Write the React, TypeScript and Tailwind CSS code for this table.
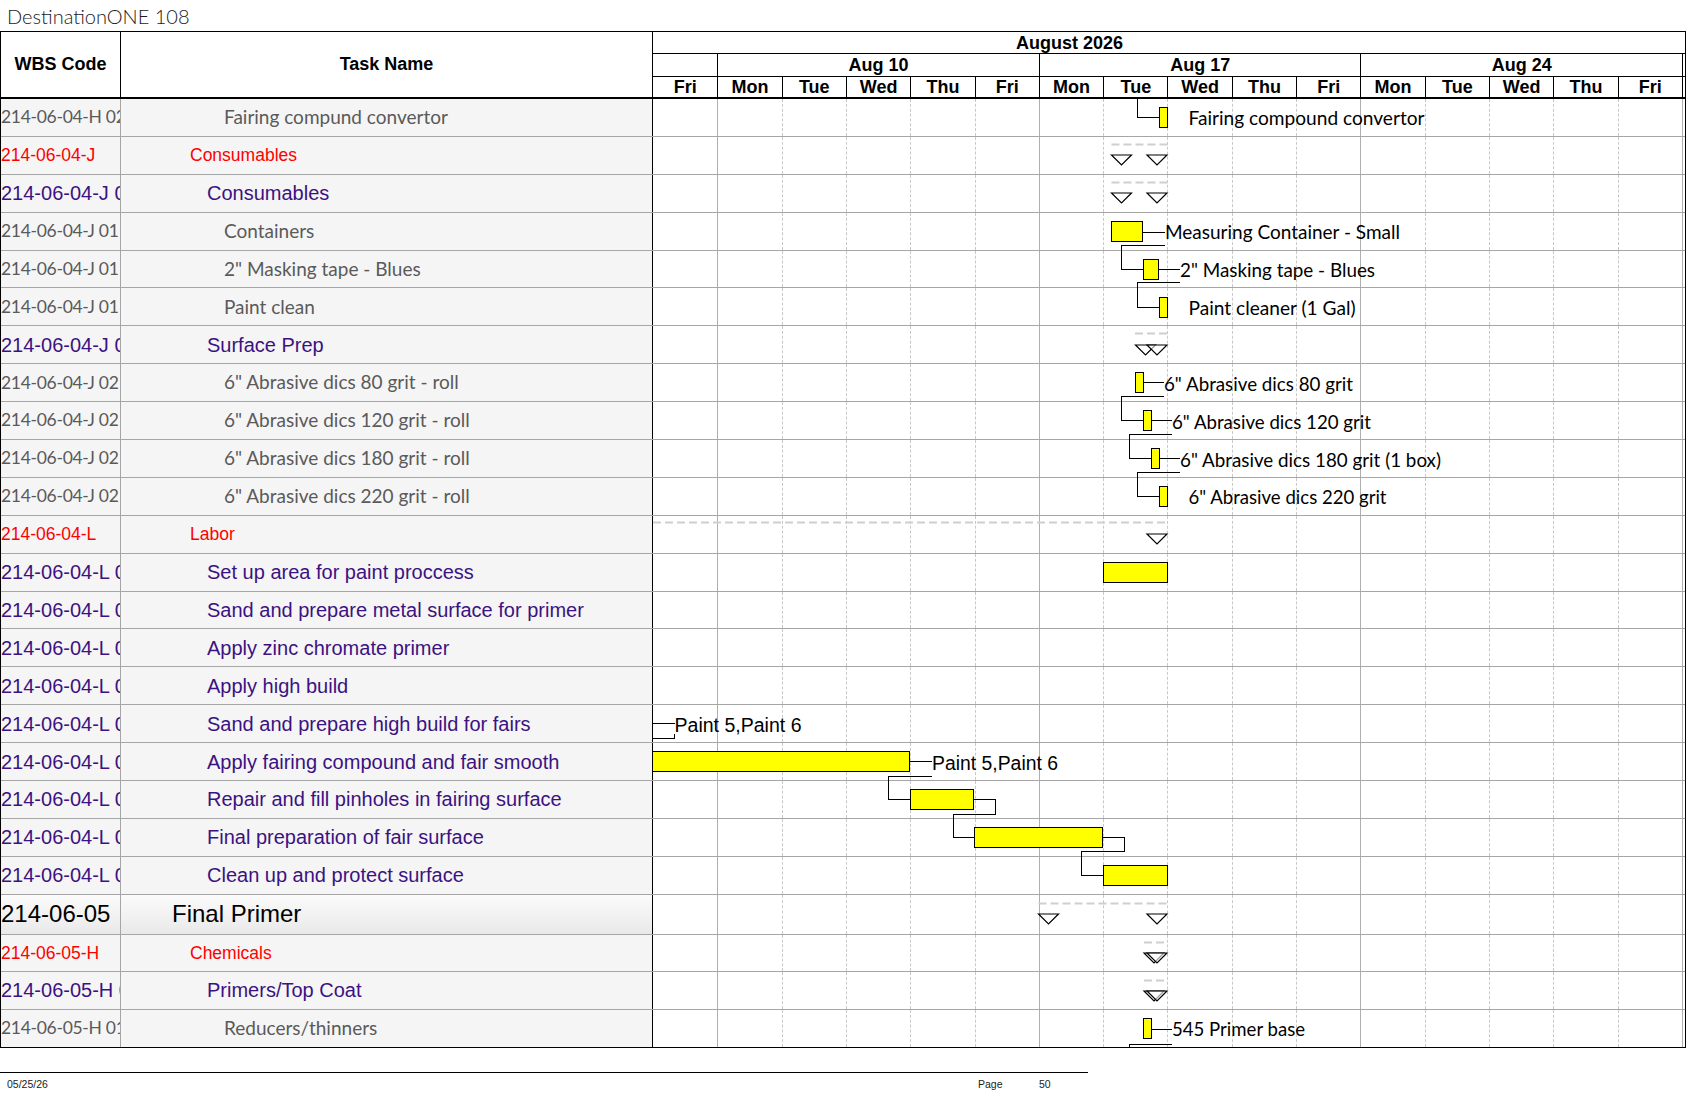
import React from 'react'

const ARIAL = "font-['Liberation_Sans',Arial,sans-serif]"

type Row = { wbs: string; name: string; lvl: 1 | 2 | 3 | 4 }

const rows: Row[] = [
  { wbs: '214-06-04-H 02', name: 'Fairing compund convertor', lvl: 4 },
  { wbs: '214-06-04-J', name: 'Consumables', lvl: 2 },
  { wbs: '214-06-04-J 01', name: 'Consumables', lvl: 3 },
  { wbs: '214-06-04-J 01', name: 'Containers', lvl: 4 },
  { wbs: '214-06-04-J 01', name: '2" Masking tape - Blues', lvl: 4 },
  { wbs: '214-06-04-J 01', name: 'Paint clean', lvl: 4 },
  { wbs: '214-06-04-J 02', name: 'Surface Prep', lvl: 3 },
  { wbs: '214-06-04-J 02', name: '6" Abrasive dics 80 grit - roll', lvl: 4 },
  { wbs: '214-06-04-J 02', name: '6" Abrasive dics 120 grit - roll', lvl: 4 },
  { wbs: '214-06-04-J 02', name: '6" Abrasive dics 180 grit - roll', lvl: 4 },
  { wbs: '214-06-04-J 02', name: '6" Abrasive dics 220 grit - roll', lvl: 4 },
  { wbs: '214-06-04-L', name: 'Labor', lvl: 2 },
  { wbs: '214-06-04-L 01', name: 'Set up area for paint proccess', lvl: 3 },
  { wbs: '214-06-04-L 02', name: 'Sand and prepare metal surface for primer', lvl: 3 },
  { wbs: '214-06-04-L 03', name: 'Apply zinc chromate primer', lvl: 3 },
  { wbs: '214-06-04-L 04', name: 'Apply high build', lvl: 3 },
  { wbs: '214-06-04-L 05', name: 'Sand and prepare high build for fairs', lvl: 3 },
  { wbs: '214-06-04-L 06', name: 'Apply fairing compound and fair smooth', lvl: 3 },
  { wbs: '214-06-04-L 07', name: 'Repair and fill pinholes in fairing surface', lvl: 3 },
  { wbs: '214-06-04-L 08', name: 'Final preparation of fair surface', lvl: 3 },
  { wbs: '214-06-04-L 09', name: 'Clean up and protect surface', lvl: 3 },
  { wbs: '214-06-05', name: 'Final Primer', lvl: 1 },
  { wbs: '214-06-05-H', name: 'Chemicals', lvl: 2 },
  { wbs: '214-06-05-H 01', name: 'Primers/Top Coat', lvl: 3 },
  { wbs: '214-06-05-H 01', name: 'Reducers/thinners', lvl: 4 },
]

const levelStyle = {
  1: { wbs: "font-['Liberation_Sans',Arial,sans-serif] text-[24px] text-black", name: "font-['Liberation_Sans',Arial,sans-serif] text-[24px] text-black pl-[51px]" },
  2: { wbs: "font-['Liberation_Sans',Arial,sans-serif] text-[17.5px] text-[#ff0000]", name: "font-['Liberation_Sans',Arial,sans-serif] text-[17.5px] text-[#ff0000] pl-[69px]" },
  3: { wbs: "font-['Liberation_Sans',Arial,sans-serif] text-[20px] text-[#3c1282]", name: "font-['Liberation_Sans',Arial,sans-serif] text-[20px] text-[#3c1282] pl-[86px]" },
  4: { wbs: "font-['Lato','Carlito',sans-serif] text-[17.5px] tracking-[-0.3px] text-[#5a5a5a]", name: "font-['Lato','Carlito',sans-serif] text-[19px] text-[#5a5a5a] pl-[103px]" },
}

const rowHeights = [
  'h-[37.9px] border-b', 'h-[37.9px] border-b', 'h-[37.9px] border-b', 'h-[37.9px] border-b', 'h-[37.9px] border-b',
  'h-[37.9px] border-b', 'h-[37.9px] border-b', 'h-[37.9px] border-b', 'h-[37.9px] border-b', 'h-[37.9px] border-b',
  'h-[37.9px] border-b', 'h-[37.9px] border-b', 'h-[37.9px] border-b', 'h-[37.9px] border-b', 'h-[37.9px] border-b',
  'h-[37.9px] border-b', 'h-[37.9px] border-b', 'h-[37.9px] border-b', 'h-[37.9px] border-b', 'h-[37.9px] border-b',
  'h-[37.9px] border-b', 'h-[40px] border-b', 'h-[37.5px] border-b', 'h-[37.5px] border-b', 'h-[37.4px]',
]

const days = ['Fri', 'Mon', 'Tue', 'Wed', 'Thu', 'Fri', 'Mon', 'Tue', 'Wed', 'Thu', 'Fri', 'Mon', 'Tue', 'Wed', 'Thu', 'Fri']

// row tops in page coordinates, used by the chart overlay
const top = (n: number) => {
  if (n <= 22) return 99 + (n - 1) * 37.9
  if (n === 23) return 934.9
  if (n === 24) return 972.4
  return 1009.9
}

const bars: [number, number, number][] = [
  [1, 1159.5, 8],
  [4, 1111.5, 31],
  [5, 1143.5, 15],
  [6, 1159.5, 8],
  [8, 1135.5, 7.5],
  [9, 1143.5, 7.5],
  [10, 1151.5, 7.5],
  [11, 1159.5, 8],
  [13, 1103.5, 64],
  [18, 652.5, 257],
  [19, 910.5, 63],
  [20, 974.5, 128],
  [21, 1103.5, 63.5],
  [25, 1143.5, 7.5],
]

const links = [
  '1137.5,99 1137.5,117.5 1159.5,117.5',
  '1142.5,232.5 1165,232.5',
  '1165,245.5 1121.5,245.5 1121.5,269.5 1143.5,269.5',
  '1158.5,269.5 1180,269.5',
  '1180,282.5 1137.5,282.5 1137.5,307.5 1159.5,307.5',
  '1143,382.5 1164,382.5',
  '1164,396.5 1121.5,396.5 1121.5,420.5 1143.5,420.5',
  '1151,420.5 1172,420.5',
  '1172,434.5 1129.5,434.5 1129.5,458.5 1151.5,458.5',
  '1159,458 1180,458',
  '1180,472.5 1137.5,472.5 1137.5,496.5 1159.5,496.5',
  '652,723.5 674.5,723.5',
  '652,738.5 674.5,738.5 674.5,733.5',
  '909.5,761.5 932,761.5',
  '932,776.5 888.5,776.5 888.5,799.5 910.5,799.5',
  '973.5,799.5 995.5,799.5 995.5,814.5 953.5,814.5 953.5,837.5 974.5,837.5',
  '1102.5,837.5 1124.5,837.5 1124.5,851.5 1081.5,851.5 1081.5,875.5 1103.5,875.5',
  '1151,1029.5 1172,1029.5',
  '1172,1044.5 1129.5,1044.5 1129.5,1048',
]

const summaries: { y: number; from: number; to: number; tris: [number, number][] }[] = [
  { y: 144.5, from: 1111.5, to: 1167.5, tris: [[1111.5, 155], [1147, 155]] },
  { y: 182.5, from: 1111.5, to: 1167.5, tris: [[1111.5, 193], [1147, 193]] },
  { y: 333.5, from: 1135, to: 1167.5, tris: [[1135.5, 345], [1147, 345]] },
  { y: 522.5, from: 653, to: 1167.5, tris: [[1147, 534]] },
  { y: 903.5, from: 1038.5, to: 1167, tris: [[1038.5, 914], [1147, 914]] },
  { y: 942.5, from: 1144, to: 1167, tris: [[1144, 953], [1147, 953]] },
  { y: 980.5, from: 1144, to: 1167, tris: [[1144, 991], [1147, 991]] },
]

const labels: { row: number; x: number; text: string; w: number; arial?: boolean }[] = [
  { row: 1, x: 1188.5, text: 'Fairing compound convertor', w: 236 },
  { row: 4, x: 1165, text: 'Measuring Container - Small', w: 235 },
  { row: 5, x: 1180, text: '2" Masking tape - Blues', w: 195 },
  { row: 6, x: 1188.5, text: 'Paint cleaner (1 Gal)', w: 167 },
  { row: 8, x: 1164, text: '6" Abrasive dics 80 grit', w: 189 },
  { row: 9, x: 1172, text: '6" Abrasive dics 120 grit', w: 199 },
  { row: 10, x: 1180, text: '6" Abrasive dics 180 grit (1 box)', w: 261 },
  { row: 11, x: 1188.5, text: '6" Abrasive dics 220 grit', w: 198 },
  { row: 17, x: 674.5, text: 'Paint 5,Paint 6', w: 127, arial: true },
  { row: 18, x: 932, text: 'Paint 5,Paint 6', w: 126, arial: true },
  { row: 25, x: 1172, text: '545 Primer base', w: 133 },
]

function GanttCells() {
  return (
    <div className="flex h-full w-[1033px] shrink-0 border-l border-black bg-white">
      <div className="h-full w-[64.3px] shrink-0" />
      {days.slice(1).map((d, i) => (
        <div
          key={i}
          className={`h-full w-[64.32px] shrink-0 border-l ${
            d === 'Mon' ? 'border-solid border-[#b0b0b0]' : 'border-dashed border-[#c8c8c8]'
          }`}
        />
      ))}
      <div className="h-full flex-1 border-l border-[#b0b0b0]" />
    </div>
  )
}

function ChartOverlay() {
  return (
    <svg
      className="absolute left-0 top-0 pointer-events-none"
      width={1684}
      height={949}
      viewBox="1 99 1684 949"
    >
      {summaries.map((s, i) => (
        <g key={i}>
          <line x1={s.from} x2={s.to} y1={s.y} y2={s.y} stroke="#cfcfcf" strokeWidth={2} strokeDasharray="8 4" />
          {s.tris.map(([x, t], j) => (
            <polygon
              key={j}
              points={`${x},${t} ${x + 20},${t} ${x + 10},${t + 10}`}
              fill="white"
              fillOpacity={j === 0 ? 1 : 0.6}
              stroke="black"
              strokeWidth={1.2}
            />
          ))}
        </g>
      ))}
      {links.map((p, i) => (
        <polyline key={i} points={p} fill="none" stroke="black" strokeWidth={1} shapeRendering="crispEdges" />
      ))}
      {bars.map(([r, x, w], i) => (
        <rect
          key={i}
          x={x}
          y={Math.round(top(r) + 8) + 0.5}
          width={w}
          height={20}
          fill="#ffff00"
          stroke="black"
          strokeWidth={1}
          shapeRendering="crispEdges"
        />
      ))}
      {labels.map((l, i) => (
        <text
          key={i}
          x={l.x}
          y={top(l.row) + 26.4}
          fontSize={l.arial ? 19.5 : 19}
          fontFamily={l.arial ? "'Liberation Sans', Arial, sans-serif" : "Lato, Carlito, sans-serif"}
          fill="black"
          textLength={l.w}
          lengthAdjust="spacingAndGlyphs"
        >
          {l.text}
        </text>
      ))}
    </svg>
  )
}

export default function App() {
  return (
    <div className="w-[1687px] h-[1097px] bg-white overflow-hidden">
      <div className="h-[31px] flex items-center pl-[7px] pt-[1px] font-['Lato',sans-serif] text-[20px] text-[#1a1a1a] font-light">
        DestinationONE 108
      </div>

      <div className="w-[1686px] border border-black">
        {/* header */}
        <div className={`flex h-[67px] border-b-2 border-black ${ARIAL} font-bold text-[18px] text-black`}>
          <div className="w-[120px] shrink-0 border-r border-black flex items-center justify-center">WBS Code</div>
          <div className="w-[531px] shrink-0 flex items-center justify-center">Task Name</div>
          <div className="w-[1033px] shrink-0 border-l border-black flex flex-col">
            <div className="h-[22px] border-b border-black flex items-center pl-[363px] leading-none">August 2026</div>
            <div className="h-[23px] border-b border-black flex">
              <div className="w-[64.3px] shrink-0" />
              {['Aug 10', 'Aug 17', 'Aug 24'].map((w) => (
                <div key={w} className="w-[321.6px] shrink-0 border-l border-black flex items-center justify-center leading-none">
                  {w}
                </div>
              ))}
              <div className="flex-1 border-l border-black" />
            </div>
            <div className="h-[20px] flex">
              {days.map((d, i) => (
                <div
                  key={i}
                  className={`shrink-0 flex items-center justify-center leading-none ${
                    i === 0 ? 'w-[64.3px]' : 'w-[64.32px] border-l border-black'
                  }`}
                >
                  {d}
                </div>
              ))}
              <div className="flex-1 border-l border-black" />
            </div>
          </div>
        </div>

        {/* body */}
        <div className="relative">
          {rows.map((r, i) => {
            const st = levelStyle[r.lvl]
            const bg = r.lvl === 1 ? 'bg-gradient-to-b from-[#fbfbfb] to-[#e9e9e9]' : 'bg-[#f5f5f5]'
            return (
              <div key={i} className={`flex ${rowHeights[i]} border-[#a6a6a6]`}>
                <div className={`w-[120px] shrink-0 border-r border-[#a6a6a6] ${bg} flex items-center overflow-hidden whitespace-nowrap`}>
                  <span className={st.wbs}>{r.wbs}</span>
                </div>
                <div className={`w-[531px] shrink-0 ${bg} flex items-center overflow-hidden whitespace-nowrap ${st.name}`}>
                  {r.name}
                </div>
                <GanttCells />
              </div>
            )
          })}
          <ChartOverlay />
        </div>
      </div>

      <div className={`mt-[24px] w-[1088px] border-t border-black flex items-center h-[25px] pl-[7px] ${ARIAL} text-[10.5px] text-[#222]`}>
        <span className="w-[971px] shrink-0">05/25/26</span>
        <span className="w-[61px] shrink-0">Page</span>
        <span>50</span>
      </div>
    </div>
  )
}
